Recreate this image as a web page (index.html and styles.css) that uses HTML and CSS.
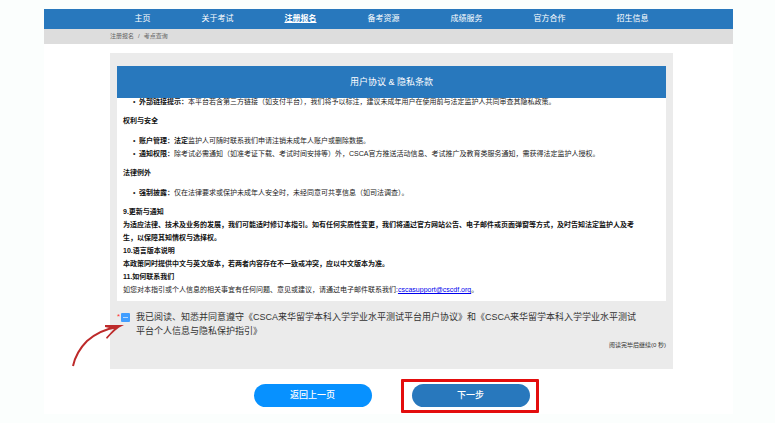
FILE: index.html
```html
<!DOCTYPE html>
<html lang="zh-CN">
<head>
<meta charset="utf-8">
<meta name="viewport" content="width=device-width, initial-scale=1">
<title>用户协议 &amp; 隐私条款</title>
<link rel="stylesheet" href="styles.css">
</head>
<body>
<div class="page">
  <nav class="nav">
    <a href="#">主页</a>
    <a href="#">关于考试</a>
    <a href="#" class="active">注册报名</a>
    <a href="#">备考资源</a>
    <a href="#">成绩服务</a>
    <a href="#">官方合作</a>
    <a href="#">招生信息</a>
  </nav>
  <div class="crumbs"><a href="#">注册报名</a><span>/</span><a href="#">考点查询</a></div>
  <main class="main">
    <section class="panel">
      <h1 class="panel-title">用户协议 &amp; 隐私条款</h1>
      <div class="terms">
        <ul class="first">
          <li><b>外部链接提示：</b>本平台若含第三方链接（如支付平台），我们将予以标注，建议未成年用户在使用前与法定监护人共同审查其隐私政策。</li>
        </ul>
        <h2>权利与安全</h2>
        <ul>
          <li><b>账户管理：法定</b>监护人可随时联系我们申请注销未成年人账户或删除数据。</li>
          <li><b>通知权限：</b>除考试必需通知（如准考证下载、考试时间安排等）外，CSCA官方推送活动信息、考试推广及教育类服务通知，需获得法定监护人授权。</li>
        </ul>
        <h2>法律例外</h2>
        <ul>
          <li><b>强制披露：</b>仅在法律要求或保护未成年人安全时，未经同意可共享信息（如司法调查）。</li>
        </ul>
        <h2>9.更新与通知</h2>
        <p><b>为适应法律、技术及业务的发展，我们可能适时修订本指引。如有任何实质性变更，我们将通过官方网站公告、电子邮件或页面弹窗等方式，及时告知法定监护人及考生，以保障其知情权与选择权。</b></p>
        <h2>10.语言版本说明</h2>
        <p><b>本政策同时提供中文与英文版本，若两者内容存在不一致或冲突，应以中文版本为准。</b></p>
        <h2>11.如何联系我们</h2>
        <p>如您对本指引或个人信息的相关事宜有任何问题、意见或建议，请通过电子邮件联系我们:<a href="mailto:cscasupport@cscdf.org">cscasupport@cscdf.org</a>。</p>
      </div>
      <div class="agree">
        <span class="required">*</span>
        <input type="checkbox" id="agree" checked>
        <label for="agree">我已阅读、知悉并同意遵守《CSCA来华留学本科入学学业水平测试平台用户协议》和《CSCA来华留学本科入学学业水平测试平台个人信息与隐私保护指引》</label>
        <svg class="arrow" viewBox="0 0 56 46" aria-hidden="true">
          <path class="shaft" d="M2 43C4 34 9 25 16 18C24 11 34 6 46 4"/>
          <path class="head" d="M34 2L53 2C46 5 41 10 36 16L35 14.500L43 6L34 4Z"/>
        </svg>
      </div>
      <p class="note">阅读完毕后继续(0 秒)</p>
    </section>
    <div class="actions">
      <button type="button" class="back">返回上一页</button>
      <div class="highlight"><button type="button" class="next">下一步</button></div>
    </div>
  </main>
</div>
</body>
</html>
```
FILE: styles.css
```css
* {
  box-sizing: border-box;
}

body {
  margin: 0;
  background: #fbfefd;
  color: #333;
  font-family: "Liberation Sans", "Noto Sans CJK SC", sans-serif;
  font-size: 7px;
  line-height: 13px;
}

h1, h2, p, ul {
  margin: 0;
}

.page {
  margin: 9px 42px 10px 44px;
  background: #fff;
}

.nav,
.crumbs,
.main {
  padding: 0 60px 0 66px;
}

.nav {
  display: flex;
  justify-content: center;
  gap: 51px;
  background: #2878bd;
  font-size: 8px;
  line-height: 20px;
}

.nav a {
  color: #fff;
  text-decoration: none;
  white-space: nowrap;
}

.nav .active {
  font-weight: bold;
  text-decoration: underline;
}

.crumbs {
  display: flex;
  gap: 4px;
  background: #ddd;
  color: #666;
  font-size: 6px;
  line-height: 15px;
}

.crumbs a {
  color: inherit;
  text-decoration: none;
}

.panel {
  margin-top: 9px;
  padding: 13px 7px 17px;
  background: #ebebeb;
}

.panel-title {
  background: #2878bd;
  color: #fff;
  font-size: 9px;
  font-weight: normal;
  line-height: 32px;
  text-align: center;
}

.terms {
  overflow: hidden;
  padding: 0 25px 5px 6px;
  background: #fff;
  color: #222;
}

.terms h2 {
  font-size: 7px;
}

.terms ul {
  margin: 7px 0 6px;
  padding-left: 10px;
  list-style: none;
}

.terms li {
  display: flex;
}

.terms li::before {
  content: "•";
  flex: none;
  width: 6px;
}

.terms .first {
  margin-top: -3px;
}

.terms b,
.terms h2 {
  color: #111;
}

.terms a {
  color: #00e;
}

.agree {
  position: relative;
  display: flex;
  align-items: flex-start;
  padding: 9px 24px 0 0;
  font-size: 9px;
  line-height: 14px;
}

.required {
  width: 5px;
  color: #f33;
  font-size: 8px;
}

.agree input {
  appearance: none;
  flex: none;
  width: 9px;
  height: 9px;
  margin: 3px 6px 0 0;
  border-radius: 1px;
  background: #409eff linear-gradient(#b5d9ff, #b5d9ff) center / 5px 1px no-repeat;
}

.arrow {
  position: absolute;
  top: 22px;
  left: -46px;
  width: 56px;
  height: 46px;
}

.shaft {
  fill: none;
  stroke: #bd2a2a;
  stroke-width: 2;
}

.head {
  fill: #bd2a2a;
}

.note {
  font-size: 6px;
  line-height: 14px;
  text-align: right;
}

.actions {
  display: flex;
  justify-content: center;
  gap: 40px;
  padding: 15px 0 7px;
}

button {
  width: 118px;
  height: 23px;
  padding: 0;
  border: 0;
  border-radius: 12px;
  color: #fff;
  font: 500 9px/23px "Liberation Sans", "Noto Sans CJK SC", sans-serif;
}

.back {
  background: #0791ff;
}

.next {
  display: block;
  background: #2878bd;
}

.highlight {
  position: relative;
}

.highlight::after {
  content: "";
  position: absolute;
  inset: -5px -9px -6px -11px;
  border: 3px solid #e30d0d;
  border-radius: 1px;
  pointer-events: none;
}
```
